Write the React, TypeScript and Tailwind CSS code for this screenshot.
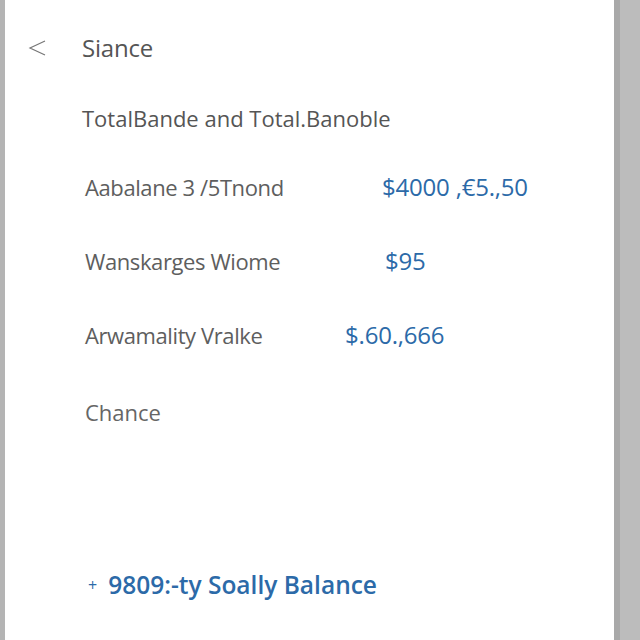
import React from "react";

const rows = [
  { label: "Aabalane 3 /5Tnond", value: "$4000 ,€5.,50", w: "w-[297px]" },
  { label: "Wanskarges Wiome", value: "$95", w: "w-[300px]" },
  { label: "Arwamality Vralke", value: "$.60.,666", w: "w-[260px]" },
];

export default function App() {
  return (
    <div
      className="w-[640px] h-[640px] flex bg-[#b9b9b9] overflow-hidden"
      style={{ fontFamily: '"Open Sans", "Noto Sans", sans-serif' }}
    >
      <div className="w-[5px] bg-[#b4b4b4]" />
      <div className="w-[609px] h-full bg-white flex flex-col">
        <div className="h-[96px] flex items-center pl-[22px] pb-[1px]">
          <svg width="20" height="18" viewBox="0 0 20 18" className="mr-[35px]">
            <path d="M18 2 L3 9 L18 16" fill="none" stroke="#777" strokeWidth="1.2" />
          </svg>
          <span className="text-[24px] text-[#555] tracking-[-0.2px]">Siance</span>
        </div>
        <div className="pl-[77px] h-[44px] flex items-center text-[22px] text-[#555] tracking-[0px]">
          TotalBande and Total.Banoble
        </div>
        <div className="h-[10px]" />
        {rows.map((r, i) => (
          <div key={i} className="h-[74px] flex items-center pl-[80px]">
            <span className={`${r.w} text-[22px] text-[#5e5e5e] tracking-[-0.4px] shrink-0`}>{r.label}</span>
            <span className="text-[24px] text-[#2c6aa8] tracking-[-0.2px]">{r.value}</span>
          </div>
        ))}
        <div className="h-[80px] flex items-center pl-[80px] text-[22px] text-[#666]">Chance</div>
        <div className="h-[108px]" />
        <div className="h-[50px] flex items-center pl-[83px] text-[24.5px] font-semibold text-[#2c6aa8]">
          <span className="text-[16px] mr-[11px] font-normal">+</span>
          9809:-ty Soally Balance
        </div>
      </div>
      <div className="w-[6px] bg-[#a9a9a9]" />
      <div className="flex-1 bg-[#bcbcbc]" />
    </div>
  );
}
